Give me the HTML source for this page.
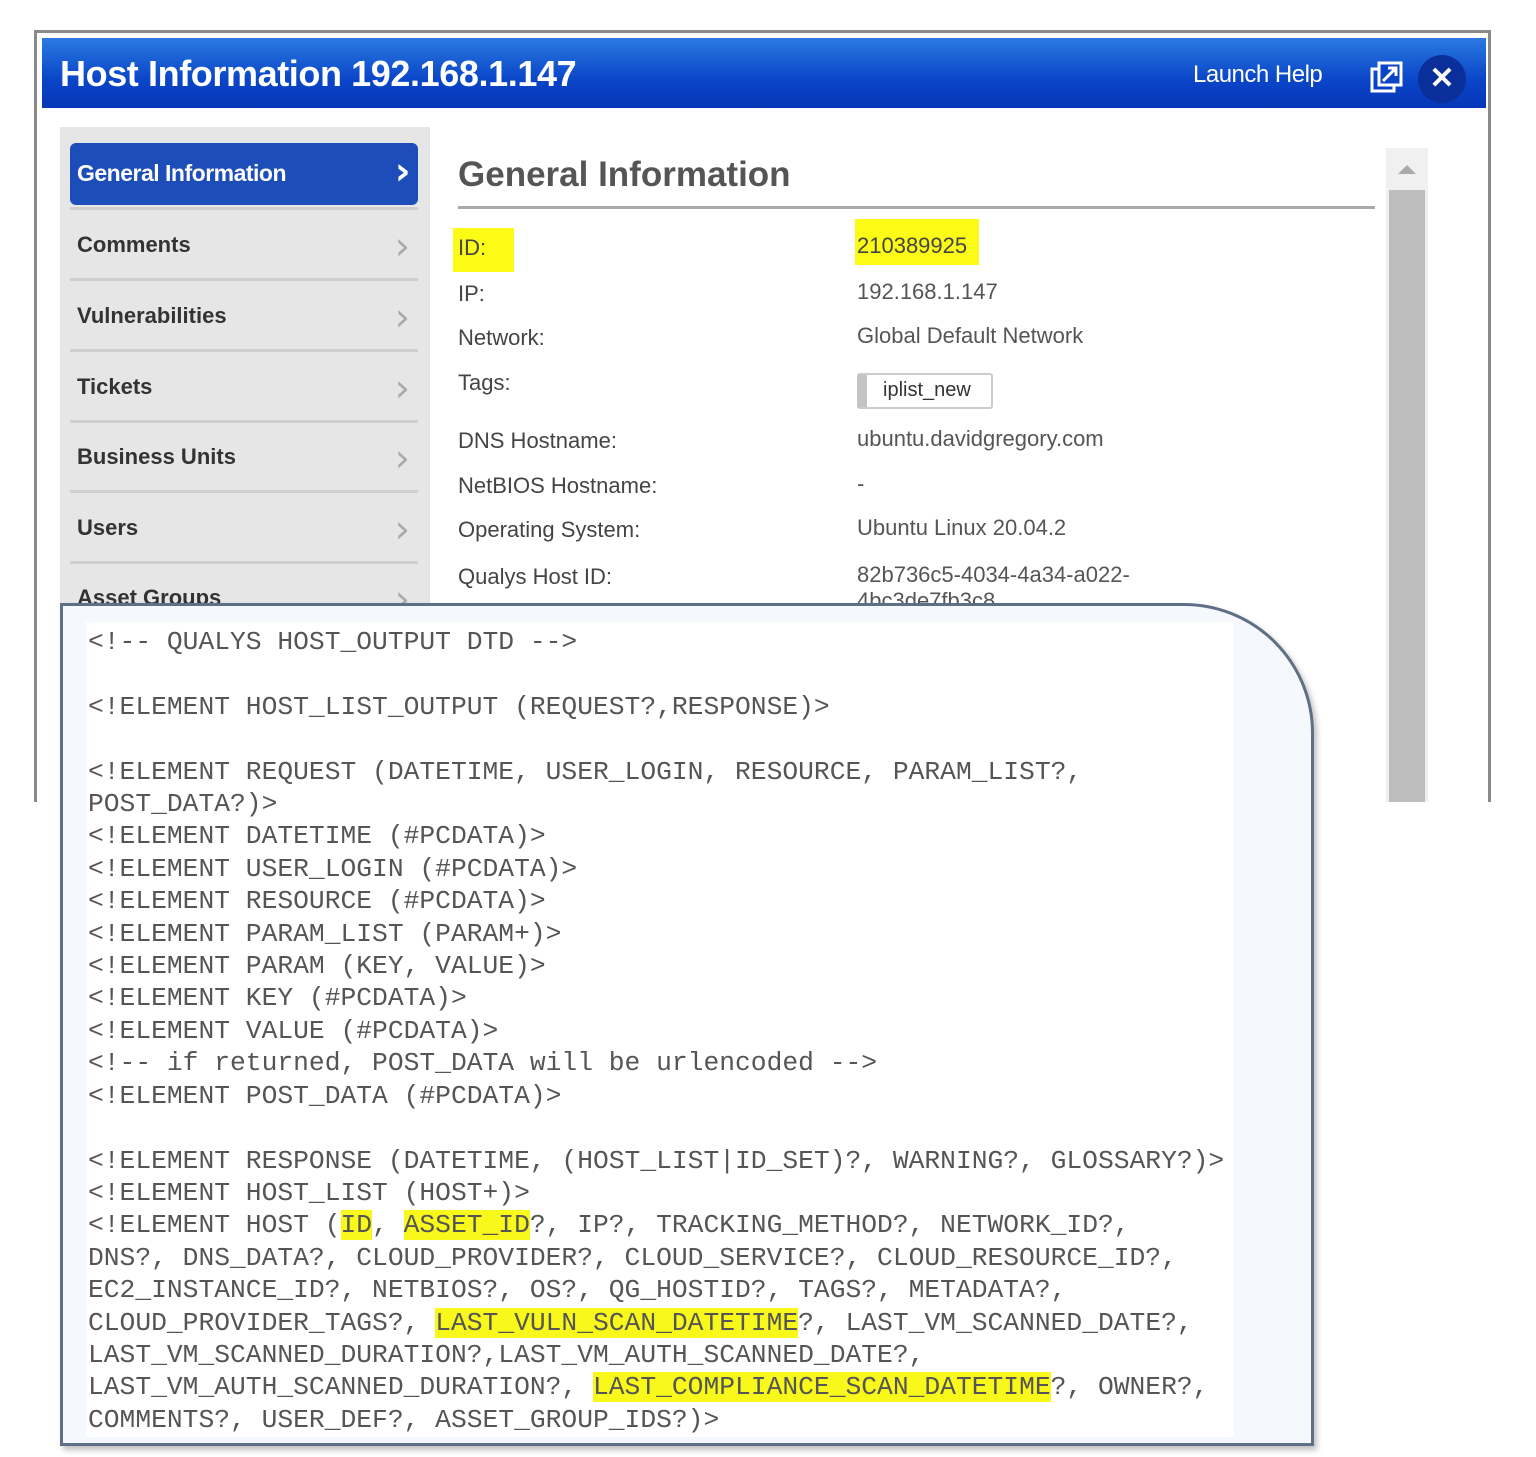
<!DOCTYPE html>
<html><head><meta charset="utf-8"><style>
*{margin:0;padding:0;box-sizing:border-box}
body{width:1536px;height:1457px;background:#fff;position:relative;overflow:hidden;font-family:"Liberation Sans",Arial,sans-serif}
.abs{position:absolute}
#modal{left:34px;top:30px;width:1457px;height:772px;border:3px solid #8a8a8a;border-bottom:none;background:#fff}
#hdr{left:42px;top:38px;width:1444px;height:70px;background:linear-gradient(#2a7ae0,#0a45c8 60%,#0636b8)}
#title{left:60px;top:53px;color:#fff;font-weight:bold;font-size:36px;letter-spacing:-0.4px}
#help{left:1193px;top:61px;color:#fff;font-size:24px;letter-spacing:-0.5px}
#close{left:1418px;top:55px;width:48px;height:48px;border-radius:50%;background:#0a2f9a;color:#fff;font-size:30px;font-weight:bold;text-align:center;line-height:48px}
#side{left:60px;top:127px;width:370px;height:476px;background:#e6e6e6}
.item{position:absolute;left:70px;width:348px;height:71px;border-bottom:3px solid #cfcfcf;font-weight:bold;font-size:22px;color:#333}
.item span{position:absolute;left:7px;top:22px}
.item i{position:absolute;right:8px;top:14px;font-style:normal;color:#aaa;font-size:38px;font-weight:normal;font-family:"DejaVu Sans",sans-serif}
#act{left:70px;top:143px;width:348px;height:62px;background:#1c4db8;border-radius:6px;color:#fff;font-weight:bold;font-size:23px;letter-spacing:-0.5px}
#act span{position:absolute;left:7px;top:17px}
#act i{position:absolute;right:8px;top:6px;font-style:normal;font-size:38px;font-family:"DejaVu Sans",sans-serif}
#gh{left:458px;top:155px;font-size:35px;font-weight:bold;color:#555}
#gl{left:458px;top:206px;width:917px;height:3px;background:#aaa}
.lb{position:absolute;left:458px;font-size:22px;color:#444}
.vl{position:absolute;left:857px;font-size:22px;color:#555}
.hl{background:#fbfb16}
#scr{left:1386px;top:148px;width:42px;height:654px;background:#f0f0f0}
#thumb{left:1389px;top:190px;width:36px;height:612px;background:#bdbdbd}
#ov{left:60px;top:603px;width:1254px;height:843px;border:3px solid #5f6f85;border-top-right-radius:130px;background:#f5f8fc;box-shadow:3px 4px 6px rgba(0,0,0,0.25)}
#code{left:86px;top:622px;width:1148px;height:815px;background:#fff}
pre{position:absolute;left:88px;top:626px;font-family:"Liberation Mono","Courier New",monospace;font-size:26.3px;line-height:32.4px;color:#555}
pre b{font-weight:normal;background:#f8f81a}
</style></head><body>
<div class="abs" id="modal"></div>
<div class="abs" id="hdr"></div>
<div class="abs" id="title">Host Information 192.168.1.147</div>
<div class="abs" id="help">Launch Help</div>
<svg class="abs" style="left:1370px;top:61px" width="34" height="34" viewBox="0 0 34 34"><rect x="2" y="8" width="22" height="22" fill="none" stroke="#fff" stroke-width="3"/><rect x="9" y="2" width="22" height="22" fill="#0a45c8" stroke="#fff" stroke-width="3"/><path d="M13 20 L26 7 M18 7 H26 V15" stroke="#fff" stroke-width="3" fill="none"/></svg>
<div class="abs" id="close">✕</div>
<div class="abs" id="side"></div>
<div class="abs" id="act"><span>General Information</span><i>›</i></div>
<div class="abs" style="left:70px;top:207px;width:348px;height:3px;background:#cfcfcf"></div>
<div class="item" style="top:210px"><span>Comments</span><i>›</i></div>
<div class="item" style="top:281px"><span>Vulnerabilities</span><i>›</i></div>
<div class="item" style="top:352px"><span>Tickets</span><i>›</i></div>
<div class="item" style="top:422px"><span>Business Units</span><i>›</i></div>
<div class="item" style="top:493px"><span>Users</span><i>›</i></div>
<div class="item" style="top:563px;border:none"><span>Asset Groups</span><i>›</i></div>
<div class="abs" id="gh">General Information</div>
<div class="abs" id="gl"></div>
<div class="abs hl" style="left:453px;top:228px;width:61px;height:44px"></div>
<div class="lb" style="top:235px">ID:</div>
<div class="lb" style="top:281px">IP:</div>
<div class="lb" style="top:325px">Network:</div>
<div class="lb" style="top:370px">Tags:</div>
<div class="lb" style="top:428px">DNS Hostname:</div>
<div class="lb" style="top:473px">NetBIOS Hostname:</div>
<div class="lb" style="top:517px">Operating System:</div>
<div class="lb" style="top:564px">Qualys Host ID:</div>
<div class="abs hl" style="left:855px;top:219px;width:124px;height:46px"></div>
<div class="vl" style="top:233px;color:#444">210389925</div>
<div class="vl" style="top:279px">192.168.1.147</div>
<div class="vl" style="top:323px">Global Default Network</div>
<div class="abs" style="left:857px;top:373px;width:136px;height:36px;border:2px solid #ccc;border-left:10px solid #c4c4c4;border-radius:3px;background:#fff;font-size:20px;color:#333;padding:4px 0 0 16px">iplist_new</div>
<div class="vl" style="top:426px">ubuntu.davidgregory.com</div>
<div class="vl" style="top:471px">-</div>
<div class="vl" style="top:515px">Ubuntu Linux 20.04.2</div>
<div class="vl" style="top:562px;line-height:26px">82b736c5-4034-4a34-a022-<br>4bc3de7fb3c8</div>
<div class="abs" id="scr"></div>
<div class="abs" style="left:1398px;top:165px;width:0;height:0;border-left:9px solid transparent;border-right:9px solid transparent;border-bottom:9px solid #aaa"></div>
<div class="abs" id="thumb"></div>
<div class="abs" id="ov"></div>
<div class="abs" id="code"></div>
<pre>&lt;!-- QUALYS HOST_OUTPUT DTD --&gt;

&lt;!ELEMENT HOST_LIST_OUTPUT (REQUEST?,RESPONSE)&gt;

&lt;!ELEMENT REQUEST (DATETIME, USER_LOGIN, RESOURCE, PARAM_LIST?,
POST_DATA?)&gt;
&lt;!ELEMENT DATETIME (#PCDATA)&gt;
&lt;!ELEMENT USER_LOGIN (#PCDATA)&gt;
&lt;!ELEMENT RESOURCE (#PCDATA)&gt;
&lt;!ELEMENT PARAM_LIST (PARAM+)&gt;
&lt;!ELEMENT PARAM (KEY, VALUE)&gt;
&lt;!ELEMENT KEY (#PCDATA)&gt;
&lt;!ELEMENT VALUE (#PCDATA)&gt;
&lt;!-- if returned, POST_DATA will be urlencoded --&gt;
&lt;!ELEMENT POST_DATA (#PCDATA)&gt;

&lt;!ELEMENT RESPONSE (DATETIME, (HOST_LIST|ID_SET)?, WARNING?, GLOSSARY?)&gt;
&lt;!ELEMENT HOST_LIST (HOST+)&gt;
&lt;!ELEMENT HOST (<b>ID</b>, <b>ASSET_ID</b>?, IP?, TRACKING_METHOD?, NETWORK_ID?,
DNS?, DNS_DATA?, CLOUD_PROVIDER?, CLOUD_SERVICE?, CLOUD_RESOURCE_ID?,
EC2_INSTANCE_ID?, NETBIOS?, OS?, QG_HOSTID?, TAGS?, METADATA?,
CLOUD_PROVIDER_TAGS?, <b>LAST_VULN_SCAN_DATETIME</b>?, LAST_VM_SCANNED_DATE?,
LAST_VM_SCANNED_DURATION?,LAST_VM_AUTH_SCANNED_DATE?,
LAST_VM_AUTH_SCANNED_DURATION?, <b>LAST_COMPLIANCE_SCAN_DATETIME</b>?, OWNER?,
COMMENTS?, USER_DEF?, ASSET_GROUP_IDS?)&gt;</pre>
</body></html>
